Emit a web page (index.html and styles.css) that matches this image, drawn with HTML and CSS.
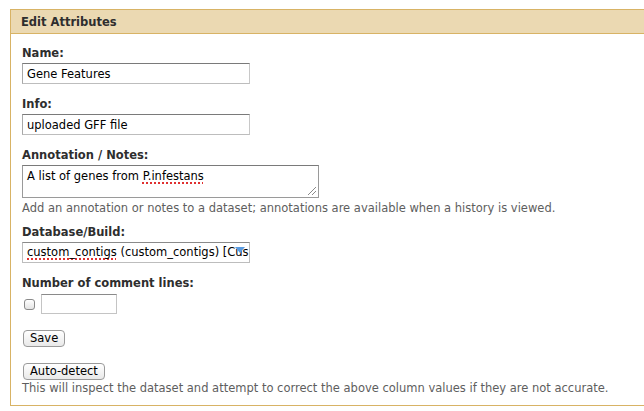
FILE: index.html
```html
<!DOCTYPE html>
<html>
<head>
<meta charset="utf-8">
<link rel="stylesheet" href="styles.css">
</head>
<body>
<div class="panel">
  <div class="panel-header">Edit Attributes</div>
  <div class="panel-body">
    <div class="row">
      <label class="lbl">Name:</label>
      <input class="txt" type="text" value="Gene Features">
    </div>
    <div class="row">
      <label class="lbl">Info:</label>
      <input class="txt" type="text" value="uploaded GFF file">
    </div>
    <div class="row row-help">
      <label class="lbl">Annotation / Notes:</label>
      <div class="area">A list of genes from <span class="spell">P.infestans</span><span class="grip"></span></div>
      <div class="help">Add an annotation or notes to a dataset; annotations are available when a history is viewed.</div>
    </div>
    <div class="row">
      <label class="lbl">Database/Build:</label>
      <div class="sel"><span class="spell">custom_contigs</span> (custom_contigs) [Cus<span class="caret"></span></div>
    </div>
    <div class="row row-num">
      <label class="lbl lbl-num">Number of comment lines:</label>
      <div class="inline">
        <span class="chk"></span>
        <span class="small-txt"></span>
      </div>
    </div>
    <div class="row row-save">
      <button class="btn">Save</button>
    </div>
    <div class="row row-last">
      <button class="btn">Auto-detect</button>
      <div class="help help-last">This will inspect the dataset and attempt to correct the above column values if they are not accurate.</div>
    </div>
  </div>
</div>
</body>
</html>
```
FILE: styles.css
```css
html, body {
  margin: 0;
  padding: 0;
  background: #fff;
}
body {
  padding: 9px 0 0 10px;
  font-family: "DejaVu Sans", Verdana, sans-serif;
  font-size: 11.5px;
  color: #2e2e2e;
  overflow: hidden;
}
.panel {
  width: 660px;
  border: 1px solid #d8b365;
  border-right: none;
}
.panel-header {
  background: #ebd9b2;
  border-bottom: 1px solid #d8b365;
  height: 23px;
  line-height: 24px;
  padding-left: 10px;
  font-weight: bold;
}
.panel-body {
  padding: 11px 0 8px 11px;
}
.row {
  margin-bottom: 12px;
}
.row-help {
  margin-bottom: 7px;
}
.lbl {
  display: block;
  font-weight: bold;
  line-height: 17px;
  margin-bottom: 1px;
}
.lbl-num {
  margin-bottom: 2px;
}
.txt {
  display: block;
  box-sizing: border-box;
  width: 228px;
  height: 21px;
  margin: 0;
  padding: 0 4px;
  font: inherit;
  color: #000;
  border: 1px solid #bdbdbd;
  border-top-color: #7a7a7a;
  border-left-color: #a8a8a8;
  border-right-color: #c8c8c8;
  border-radius: 0;
  outline: none;
}
.area {
  position: relative;
  box-sizing: border-box;
  width: 297px;
  height: 33px;
  padding: 2px 4px;
  color: #000;
  border: 1px solid #9a9a9a;
  border-top-color: #7a7a7a;
  line-height: 17px;
}
.grip {
  position: absolute;
  right: 2px;
  bottom: 2px;
  width: 8px;
  height: 8px;
  background: linear-gradient(135deg, transparent 45%, #8a8a8a 45%, #8a8a8a 55%, transparent 55%, transparent 70%, #8a8a8a 70%, #8a8a8a 80%, transparent 80%);
}
.spell {
  text-decoration: underline dotted #e03030;
  text-decoration-thickness: 2px;
  text-underline-offset: 2px;
}
.help {
  color: #5e5e5e;
  line-height: 17px;
  margin-top: 2px;
}
.sel {
  position: relative;
  box-sizing: border-box;
  width: 228px;
  height: 21px;
  line-height: 19px;
  padding: 0 4px;
  color: #000;
  border: 1px solid #bdbdbd;
  border-top-color: #8a8a8a;
  overflow: hidden;
  white-space: nowrap;
}
.caret {
  position: absolute;
  right: 4px;
  top: 4px;
  width: 0;
  height: 0;
  border-left: 5px solid transparent;
  border-right: 5px solid transparent;
  border-top: 6px solid #5a9be0;
}
.inline {
  display: flex;
  align-items: center;
  gap: 6px;
  padding-left: 2px;
}
.chk {
  box-sizing: border-box;
  width: 11px;
  height: 11px;
  border: 1px solid #8a8a8a;
  border-radius: 3px;
  background: linear-gradient(#ffffff, #e4e4e4);
}
.small-txt {
  box-sizing: border-box;
  width: 76px;
  height: 20px;
  border: 1px solid #c4c4c4;
  border-top-color: #8a8a8a;
}
.row-num {
  margin-bottom: 16px;
}
.row-save {
  margin-bottom: 16px;
}
.btn {
  display: block;
  font: inherit;
  color: #000;
  height: 17px;
  padding: 0 6px;
  margin: 0 0 0 1px;
  border: 1px solid #9a9a9a;
  border-radius: 4px;
  background: linear-gradient(#ffffff, #e9e9e9);
  line-height: 15px;
  white-space: nowrap;
}
.row-last {
  margin-bottom: 0;
}
.help-last {
  margin-top: 0;
}
```
